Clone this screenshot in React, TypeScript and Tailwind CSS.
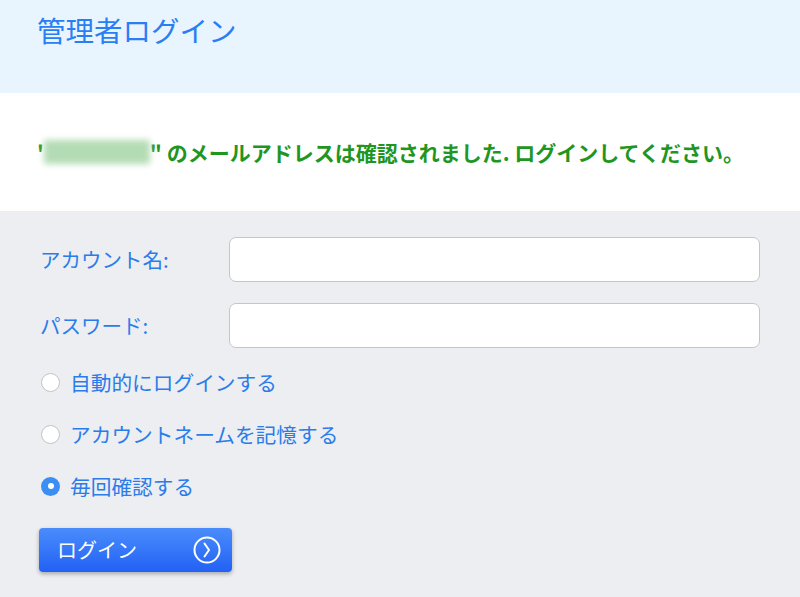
const font = { fontFamily: '"Noto Sans CJK JP", "Noto Sans", sans-serif' }

type Option = { id: string; label: string; checked: boolean }

const options: Option[] = [
  { id: "auto", label: "自動的にログインする", checked: false },
  { id: "remember", label: "アカウントネームを記憶する", checked: false },
  { id: "confirm", label: "毎回確認する", checked: true },
]

function Radio({ checked }: { checked: boolean }) {
  if (checked) {
    return (
      <span className="flex h-[19px] w-[19px] items-center justify-center rounded-full bg-[#3b8ff3]">
        <span className="h-[6px] w-[6px] rounded-full bg-white" />
      </span>
    )
  }
  return <span className="h-[19px] w-[19px] rounded-full border border-[#c4c4c4] bg-white" />
}

export default function App() {
  return (
    <div className="min-h-[597px] w-[800px] bg-[#eceef1]" style={font}>
      <div className="h-[93px] bg-[#e8f4fe] px-[37px] pt-[11px]">
        <h1 className="text-[28.5px] font-normal leading-[38px] text-[#2a7ef3]">管理者ログイン</h1>
      </div>

      <div className="flex h-[118px] items-center bg-white px-[37px]">
        <p className="flex items-center text-[21px] font-bold leading-[28px] text-[#1f961f]">
          <span>'</span>
          <span className="h-[24px] w-[106px] bg-[#b4dcb4] blur-[3px]" />
          <span>" のメールアドレスは確認されました. ログインしてください。</span>
        </p>
      </div>

      <div className="px-[38px] pt-[26px]">
        <div className="flex flex-col gap-[21px]">
          <div className="flex items-center">
            <label className="w-[191px] pl-[2px] text-[20.5px] text-[#2b7ceb]">アカウント名:</label>
            <input className="h-[45px] w-[531px] rounded-[7px] border border-[#c6c6c6] bg-white px-3 outline-none" />
          </div>
          <div className="flex items-center">
            <label className="w-[191px] pl-[2px] text-[20.5px] text-[#2b7ceb]">パスワード:</label>
            <input type="password" className="h-[45px] w-[531px] rounded-[7px] border border-[#c6c6c6] bg-white px-3 outline-none" />
          </div>
        </div>

        <div className="mt-[20px] flex flex-col gap-[24px]">
          {options.map((o) => (
            <div key={o.id} className="flex h-[28px] items-center gap-[10px] pl-[3px]">
              <Radio checked={o.checked} />
              <span className="text-[20.7px] leading-[28px] text-[#2b7ceb]">{o.label}</span>
            </div>
          ))}
        </div>

        <button className="mt-[28px] ml-[1px] flex h-[44px] w-[193px] items-center justify-between rounded-[4px] bg-gradient-to-b from-[#4a8cfb] to-[#2360f5] pl-[18px] pr-[11px] text-[20px] text-white shadow-[0_2px_4px_rgba(0,0,0,0.3)]">
          <span>ログイン</span>
          <svg width="28" height="28" viewBox="0 0 28 28" fill="none" stroke="white" strokeWidth="2">
            <circle cx="14" cy="14" r="12.5" />
            <path d="M11.5 7.5 L16 14 L11.5 20.5" strokeLinecap="round" strokeLinejoin="round" />
          </svg>
        </button>
      </div>
    </div>
  )
}
